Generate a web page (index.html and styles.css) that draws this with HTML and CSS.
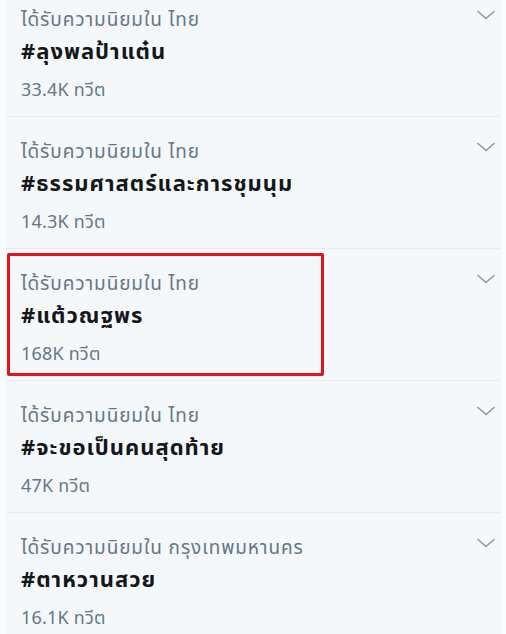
FILE: index.html
```html
<!DOCTYPE html>
<html lang="th">
<head>
<meta charset="utf-8">
<link rel="stylesheet" href="styles.css">
</head>
<body>
<div class="panel">
  <div class="trend">
    <div class="label">ได้รับความนิยมใน ไทย</div>
    <div class="tag">#ลุงพลป้าแต๋น</div>
    <div class="count">33.4K ทวีต</div>
    <svg class="chev" viewBox="0 0 20 10" width="20" height="10"><path d="M2 1.5 L10 8.5 L18 1.5" fill="none" stroke="#8b98a5" stroke-width="1.6" stroke-linecap="round" stroke-linejoin="round"/></svg>
  </div>
  <div class="trend">
    <div class="label">ได้รับความนิยมใน ไทย</div>
    <div class="tag">#ธรรมศาสตร์และการชุมนุม</div>
    <div class="count">14.3K ทวีต</div>
    <svg class="chev" viewBox="0 0 20 10" width="20" height="10"><path d="M2 1.5 L10 8.5 L18 1.5" fill="none" stroke="#8b98a5" stroke-width="1.6" stroke-linecap="round" stroke-linejoin="round"/></svg>
  </div>
  <div class="trend">
    <div class="label">ได้รับความนิยมใน ไทย</div>
    <div class="tag">#แต้วณฐพร</div>
    <div class="count">168K ทวีต</div>
    <svg class="chev" viewBox="0 0 20 10" width="20" height="10"><path d="M2 1.5 L10 8.5 L18 1.5" fill="none" stroke="#8b98a5" stroke-width="1.6" stroke-linecap="round" stroke-linejoin="round"/></svg>
    <div class="highlight"></div>
  </div>
  <div class="trend">
    <div class="label">ได้รับความนิยมใน ไทย</div>
    <div class="tag">#จะขอเป็นคนสุดท้าย</div>
    <div class="count">47K ทวีต</div>
    <svg class="chev" viewBox="0 0 20 10" width="20" height="10"><path d="M2 1.5 L10 8.5 L18 1.5" fill="none" stroke="#8b98a5" stroke-width="1.6" stroke-linecap="round" stroke-linejoin="round"/></svg>
  </div>
  <div class="trend">
    <div class="label">ได้รับความนิยมใน กรุงเทพมหานคร</div>
    <div class="tag">#ตาหวานสวย</div>
    <div class="count">16.1K ทวีต</div>
    <svg class="chev" viewBox="0 0 20 10" width="20" height="10"><path d="M2 1.5 L10 8.5 L18 1.5" fill="none" stroke="#8b98a5" stroke-width="1.6" stroke-linecap="round" stroke-linejoin="round"/></svg>
  </div>
</div>
</body>
</html>
```

FILE: styles.css
```css
html, body {
  margin: 0;
  padding: 0;
  background: #fbfcfd;
  overflow: hidden;
}
body {
  font-family: "Noto Sans", "Noto Sans Thai", "DejaVu Sans", sans-serif;
}
.panel {
  margin: -15px 5px 0 6px;
  background: #f5f8fa;
}
.trend {
  position: relative;
  padding: 22px 15px 15px;
  border-bottom: 1px solid #e6ecf0;
  box-sizing: border-box;
  height: 132px;
}
.label {
  font-size: 19px;
  line-height: 24px;
  letter-spacing: 0.9px;
  color: #657786;
  white-space: nowrap;
}
.tag {
  margin-top: 5px;
  font-size: 22px;
  line-height: 28px;
  letter-spacing: 1px;
  font-weight: 700;
  color: #14171a;
  white-space: nowrap;
}
.count {
  margin-top: 13px;
  font-size: 18px;
  line-height: 24px;
  letter-spacing: 0.2px;
  color: #657786;
  white-space: nowrap;
}
.chev {
  position: absolute;
  top: 25px;
  right: 5px;
}
.highlight {
  position: absolute;
  left: 1px;
  top: 4px;
  width: 317px;
  height: 123px;
  box-sizing: border-box;
  border: 3px solid #e1151d;
  border-radius: 2px;
}
```
